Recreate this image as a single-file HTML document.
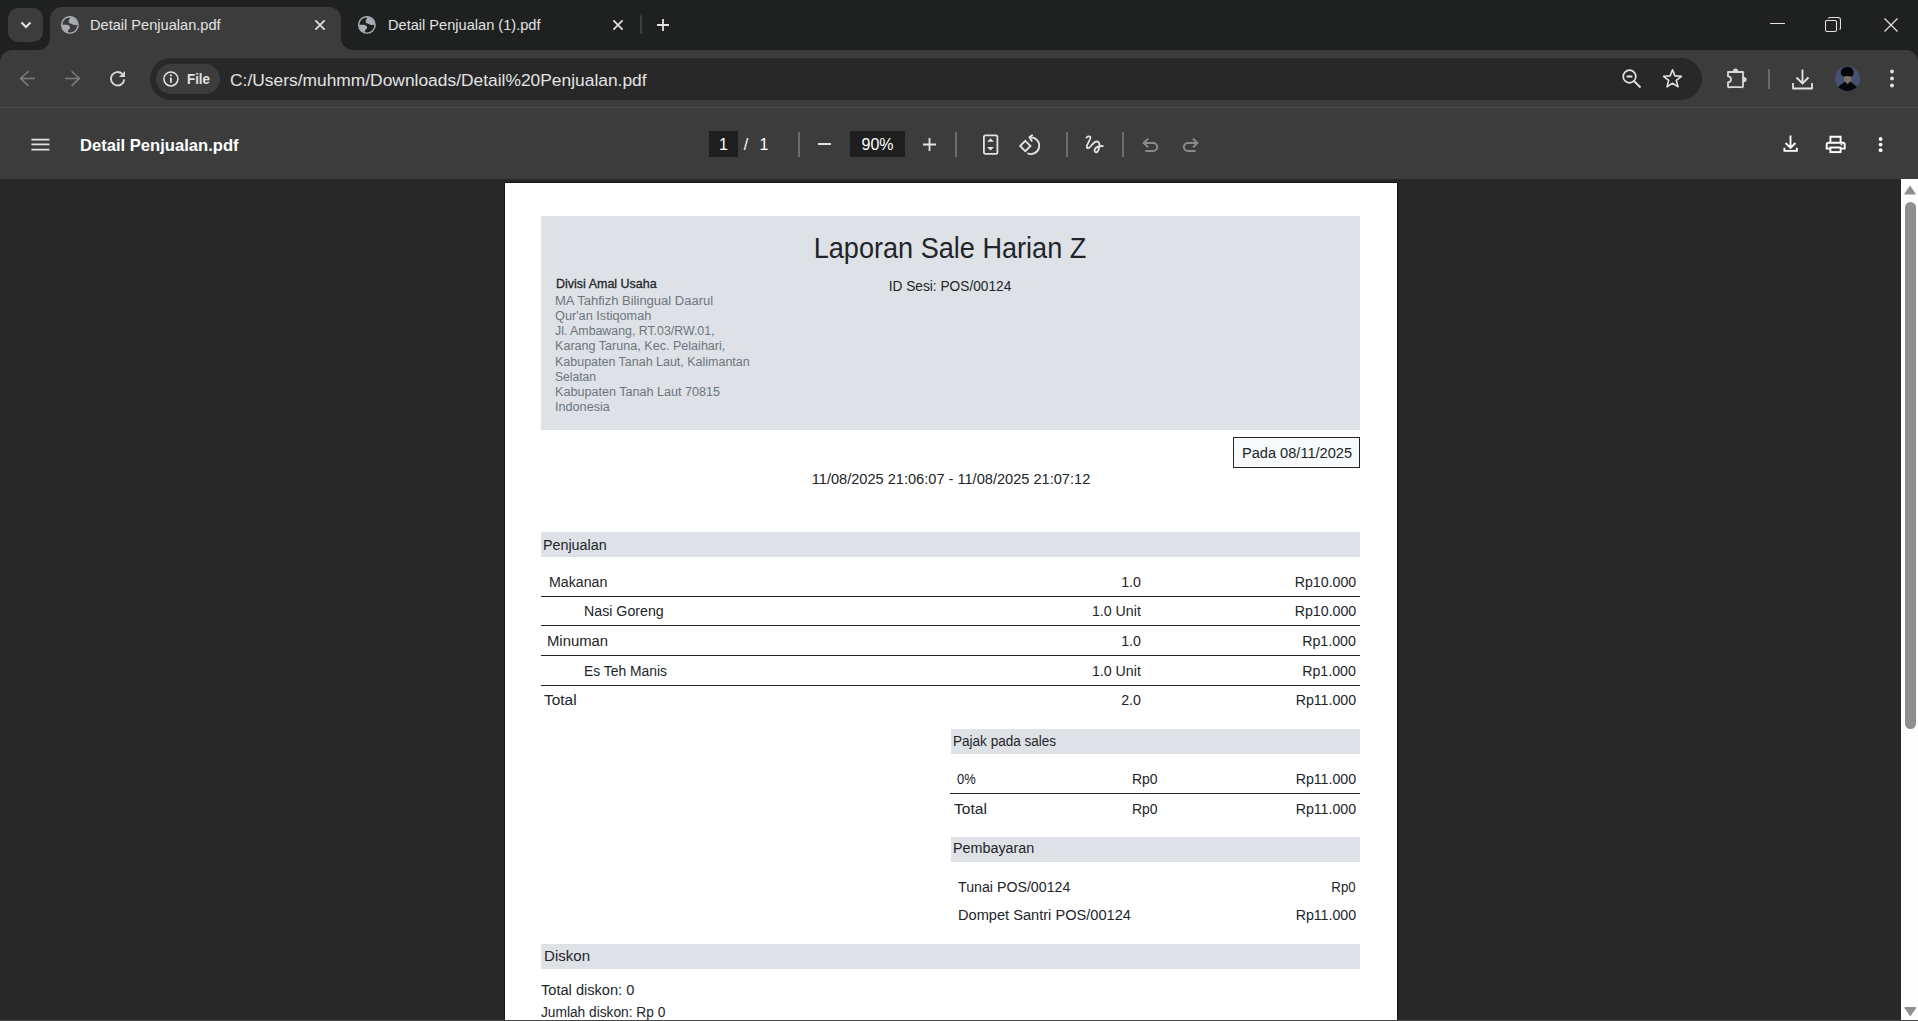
<!DOCTYPE html>
<html><head><meta charset="utf-8"><title>Detail Penjualan.pdf</title>
<style>
html,body{margin:0;padding:0;width:1918px;height:1021px;overflow:hidden;background:#282828;}
body{position:relative;font-family:"Liberation Sans",sans-serif;}
.t{position:absolute;white-space:pre;}
.r{position:absolute;display:block;}
</style></head><body>
<div class="r" style="left:0px;top:0px;width:1918px;height:64px;background:#1f2120;"></div>
<div class="r" style="left:8px;top:8px;width:35px;height:34px;background:#3c3c3c;border-radius:10px;"></div>
<svg class="r" style="left:20px;top:20px;" width="12" height="10" viewBox="0 0 12 10"><path d="M1.5 2.5 L6 7 L10.5 2.5" fill="none" stroke="#e3e3e3" stroke-width="2"/></svg>
<div class="r" style="left:50px;top:7px;width:291px;height:50px;background:#3c3c3c;border-radius:12px 12px 0 0;"></div>
<svg class="r" style="left:38px;top:38px;" width="12" height="12" viewBox="0 0 12 12"><path d="M12 0 V12 H0 A12 12 0 0 0 12 0 Z" fill="#3c3c3c"/></svg>
<svg class="r" style="left:341px;top:38px;" width="12" height="12" viewBox="0 0 12 12"><path d="M0 0 V12 H12 A12 12 0 0 1 0 0 Z" fill="#3c3c3c"/></svg>
<svg class="r" style="left:61px;top:16px;" width="18" height="18" viewBox="0 0 18 18"><circle cx="8.9" cy="8.9" r="8.2" fill="none" stroke="#a9adb3" stroke-width="1.45"/><path fill="#a9adb3" d="M9.6 1.3 C8.5 3 7.5 4.5 7.8 6.5 C8.5 7.6 10.5 7.5 12 8.5 C13 9.2 14.5 9.2 16.6 8.8 A7.8 7.8 0 0 0 9.6 1.3 Z"/><path fill="#a9adb3" d="M1.1 8.7 C3 8.6 6 8.5 7.5 9.2 C9 9.8 9.5 11.5 8.8 12.5 C8 13.5 6.8 13.8 6.7 16.6 A7.8 7.8 0 0 1 1.1 8.7 Z"/></svg>
<div class="t" style="top:17.38px;font-size:14.6px;line-height:17.52px;color:#e3e3e3;left:90px;">Detail Penjualan.pdf</div>
<svg class="r" style="left:314px;top:19px;" width="12" height="12" viewBox="0 0 12 12"><path d="M1.4 1.4 L10.6 10.6 M10.6 1.4 L1.4 10.6" stroke="#e3e3e3" stroke-width="1.7"/></svg>
<svg class="r" style="left:358px;top:16px;" width="18" height="18" viewBox="0 0 18 18"><circle cx="8.9" cy="8.9" r="8.2" fill="none" stroke="#a9adb3" stroke-width="1.45"/><path fill="#a9adb3" d="M9.6 1.3 C8.5 3 7.5 4.5 7.8 6.5 C8.5 7.6 10.5 7.5 12 8.5 C13 9.2 14.5 9.2 16.6 8.8 A7.8 7.8 0 0 0 9.6 1.3 Z"/><path fill="#a9adb3" d="M1.1 8.7 C3 8.6 6 8.5 7.5 9.2 C9 9.8 9.5 11.5 8.8 12.5 C8 13.5 6.8 13.8 6.7 16.6 A7.8 7.8 0 0 1 1.1 8.7 Z"/></svg>
<div class="t" style="top:17.38px;font-size:14.6px;line-height:17.52px;color:#e3e3e3;left:388px;">Detail Penjualan (1).pdf</div>
<svg class="r" style="left:611.5px;top:19px;" width="12" height="12" viewBox="0 0 12 12"><path d="M1.4 1.4 L10.6 10.6 M10.6 1.4 L1.4 10.6" stroke="#e3e3e3" stroke-width="1.7"/></svg>
<div class="r" style="left:640.3px;top:15px;width:2px;height:19px;background:#3d3e3e;border-radius:1px;"></div>
<svg class="r" style="left:656px;top:18px;" width="14" height="14" viewBox="0 0 14 14"><path d="M7 1 V13 M1 7 H13" stroke="#e3e3e3" stroke-width="1.8"/></svg>
<div class="r" style="left:1770px;top:23px;width:15px;height:1px;background:#e3e3e3;"></div>
<svg class="r" style="left:1825px;top:17px;" width="16" height="16" viewBox="0 0 16 16"><rect x="0.5" y="3.5" width="11" height="11" rx="1.5" fill="none" stroke="#e3e3e3" stroke-width="1.1"/><path d="M3.5 1.5 Q3.8 0.5 5 0.5 H13 Q15.5 0.5 15.5 3 V11 Q15.5 12.2 14.5 12.5" fill="none" stroke="#e3e3e3" stroke-width="1.1"/></svg>
<svg class="r" style="left:1884px;top:18px;" width="14" height="14" viewBox="0 0 14 14"><path d="M0.5 0.5 L13.5 13.5 M13.5 0.5 L0.5 13.5" stroke="#e3e3e3" stroke-width="1.2"/></svg>
<div class="r" style="left:0px;top:50px;width:1918px;height:58px;background:#3c3c3c;border-radius:12px 12px 0 0;"></div>
<div class="r" style="left:0px;top:107px;width:1918px;height:1px;background:#474948;"></div>
<svg class="r" style="left:19px;top:70px;" width="17" height="17" viewBox="0 0 17 17"><path d="M16 8.4 H1.6 M9.4 1.2 L1.6 8.4 L9.4 15.9" fill="none" stroke="#7d7d7d" stroke-width="1.5"/></svg>
<svg class="r" style="left:64px;top:70px;" width="17" height="17" viewBox="0 0 17 17"><path d="M1 8.4 H15.4 M7.6 1.2 L15.4 8.4 L7.6 15.9" fill="none" stroke="#7d7d7d" stroke-width="1.5"/></svg>
<svg class="r" style="left:105px;top:66px;" width="26" height="26" viewBox="0 0 26 26"><path d="M19.3 13.4 A6.7 6.7 0 1 1 17.2 7.8" fill="none" stroke="#d6d6d6" stroke-width="1.9"/><path d="M20 4.9 V11 H13.9 Z" fill="#d6d6d6"/></svg>
<div class="r" style="left:150px;top:58px;width:1552px;height:42px;background:#282828;border-radius:21px;"></div>
<div class="r" style="left:156px;top:64px;width:64px;height:30px;background:#3c3c3c;border-radius:15px;"></div>
<svg class="r" style="left:162px;top:70px;" width="18" height="18" viewBox="0 0 18 18"><circle cx="8.9" cy="8.9" r="7" fill="none" stroke="#e3e3e3" stroke-width="1.5"/><rect x="8" y="7.6" width="1.8" height="5.2" fill="#e3e3e3"/><circle cx="8.9" cy="5.3" r="1.1" fill="#e3e3e3"/></svg>
<div class="t" style="top:71.08px;font-size:14.5px;line-height:17.4px;color:#e3e3e3;font-weight:700;left:187px;transform:scaleX(0.92);transform-origin:left center;">File</div>
<div class="t" style="top:69.83px;font-size:17.4px;line-height:20.88px;color:#e3e3e3;left:230px;">C:/Users/muhmm/Downloads/Detail%20Penjualan.pdf</div>
<svg class="r" style="left:1620px;top:67px;" width="22" height="22" viewBox="0 0 22 22"><circle cx="9.5" cy="9.5" r="6.3" fill="none" stroke="#e3e3e3" stroke-width="1.7"/><path d="M6.6 9.5 H12.4" stroke="#e3e3e3" stroke-width="2"/><path d="M14 14 L20.5 20.5" stroke="#e3e3e3" stroke-width="1.8"/></svg>
<svg class="r" style="left:1662px;top:68px;" width="21" height="21" viewBox="0 0 21 21"><path d="M10.5 1.8 L12.9 7.9 L19.4 8.3 L14.3 12.4 L16 18.8 L10.5 15.2 L5 18.8 L6.7 12.4 L1.6 8.3 L8.1 7.9 Z" fill="none" stroke="#e3e3e3" stroke-width="1.6" stroke-linejoin="round"/></svg>
<svg class="r" style="left:1724px;top:66px;" width="26" height="24" viewBox="0 0 26 24"><path d="M4 6 H17.5 A1 1 0 0 1 19 7.5 V20 A1 1 0 0 1 17.5 21.2 H5.5 A1 1 0 0 1 4 20 V16.3 A3 3 0 0 0 4 10.3 Z" fill="none" stroke="#d8d8d8" stroke-width="1.8" stroke-linejoin="round"/><path d="M8.9 6.5 V5 A2.6 2.6 0 0 1 14.1 5 V6.5 Z" fill="#d8d8d8"/><path d="M18.5 10.9 H20 A2.6 2.6 0 0 1 20 16.1 H18.5 Z" fill="#d8d8d8"/></svg>
<div class="r" style="left:1768px;top:69px;width:2px;height:20px;background:#6a6a6a;"></div>
<svg class="r" style="left:1791px;top:68px;" width="23" height="23" viewBox="0 0 23 23"><path d="M11.5 1.5 V15 M5.5 9.5 L11.5 15.5 L17.5 9.5" fill="none" stroke="#e3e3e3" stroke-width="1.8"/><path d="M2 15 V20.5 H21 V15" fill="none" stroke="#e3e3e3" stroke-width="1.8" stroke-linejoin="round"/></svg>
<svg class="r" style="left:1835px;top:66px;" width="25" height="25" viewBox="0 0 25 25"><defs><clipPath id="av"><circle cx="12.5" cy="12.5" r="12.5"/></clipPath></defs><g clip-path="url(#av)"><rect width="25" height="25" fill="#475070"/><ellipse cx="12.6" cy="13" rx="3.7" ry="4.2" fill="#7d6e66"/><path d="M0 25 V21.5 L3.5 20.5 L10 15.5 L12.6 18.5 L15.2 15.5 L21.5 20.5 L25 21.5 V25 Z" fill="#05060b"/><path d="M6 8 Q5 3.5 8.5 2 Q12 0 15.5 1.5 Q19 3 18.5 7.5 Q18 10 16.5 10.5 Q12.5 9.5 8.8 10.5 Q7 10 6 8 Z" fill="#030303"/></g></svg>
<svg class="r" style="left:1888px;top:68px;" width="8" height="22" viewBox="0 0 8 22"><circle cx="4" cy="3.5" r="1.9" fill="#e3e3e3"/><circle cx="4" cy="10.5" r="1.9" fill="#e3e3e3"/><circle cx="4" cy="17.5" r="1.9" fill="#e3e3e3"/></svg>
<div class="r" style="left:0px;top:108px;width:1918px;height:71px;background:#3c3c3c;"></div>
<svg class="r" style="left:31px;top:138px;" width="19" height="13" viewBox="0 0 19 13"><path d="M0.4 1.6 H18.4 M0.4 6.4 H18.4 M0.4 11.6 H18.4" stroke="#e3e3e3" stroke-width="1.7"/></svg>
<div class="t" style="top:135.79px;font-size:16.6px;line-height:19.92px;color:#ffffff;font-weight:700;left:80px;">Detail Penjualan.pdf</div>
<div class="r" style="left:709px;top:131px;width:29px;height:26px;background:#1e1e1e;"></div>
<div class="t" style="top:135.36px;font-size:16px;line-height:19.2px;color:#ffffff;left:123.5px;width:1200px;text-align:center;">1</div>
<div class="t" style="top:135.36px;font-size:16px;line-height:19.2px;color:#ffffff;left:146px;width:1200px;text-align:center;">/</div>
<div class="t" style="top:135.36px;font-size:16px;line-height:19.2px;color:#ffffff;left:164px;width:1200px;text-align:center;">1</div>
<div class="r" style="left:798px;top:132px;width:2px;height:25px;background:#6c6c6c;"></div>
<div class="r" style="left:818px;top:143.2px;width:13px;height:1.8px;background:#e3e3e3;"></div>
<div class="r" style="left:850px;top:131px;width:55px;height:26px;background:#1e1e1e;"></div>
<div class="t" style="top:135.36px;font-size:16px;line-height:19.2px;color:#ffffff;left:277.5px;width:1200px;text-align:center;">90%</div>
<svg class="r" style="left:922px;top:137px;" width="15" height="15" viewBox="0 0 15 15"><path d="M7.5 1 V14 M1 7.5 H14" stroke="#e3e3e3" stroke-width="1.8"/></svg>
<div class="r" style="left:955px;top:132px;width:2px;height:25px;background:#6c6c6c;"></div>
<svg class="r" style="left:982px;top:133px;" width="17" height="23" viewBox="0 0 17 23"><rect x="1.9" y="2.3" width="13.5" height="18.6" rx="1.6" fill="none" stroke="#e3e3e3" stroke-width="1.8"/><path d="M5 8.7 L8.5 5.2 L12 8.7 Z M5 14 L8.5 17.5 L12 14 Z" fill="#e3e3e3"/></svg>
<svg class="r" style="left:1016px;top:132px;" width="28" height="26" viewBox="0 0 28 26"><path d="M9.3 8.8 L14.5 14 L9.3 19.2 L4.1 14 Z" fill="none" stroke="#e3e3e3" stroke-width="1.8" stroke-linejoin="miter"/><path d="M11.4 21.2 A8.3 8.3 0 1 0 14.8 5.4" fill="none" stroke="#e3e3e3" stroke-width="1.8"/><path d="M16.7 2.7 L13.4 5.2 L16.2 9.4" fill="none" stroke="#e3e3e3" stroke-width="1.8"/></svg>
<div class="r" style="left:1066px;top:132px;width:2px;height:25px;background:#6c6c6c;"></div>
<svg class="r" style="left:1082px;top:132px;" width="25" height="25" viewBox="0 0 25 25"><path d="M4.4 5.6 C5.5 4.5 7.5 3.8 8.4 5 C9.2 6.5 5 12 4.8 14.5 C4.6 16.5 6.5 17 8.5 14.5 C10.5 12 12.5 9.5 14.8 9.5 C17 9.5 17.8 11.5 17.3 14.5 C16.8 17.5 15.5 20.3 14 20.3 C12.3 20.3 12 18 13.5 16.2 C15 14.5 18 14.2 20.8 14" fill="none" stroke="#e3e3e3" stroke-width="1.8" stroke-linecap="round"/></svg>
<div class="r" style="left:1122px;top:132px;width:2px;height:25px;background:#6c6c6c;"></div>
<svg class="r" style="left:1140px;top:134px;" width="20" height="20" viewBox="0 0 20 20"><path d="M8.1 4.6 L3.6 9 L8.1 13.2 M3.6 9 H13.2 A4 4 0 0 1 13.2 17 H5.4" fill="none" stroke="#8a8a8a" stroke-width="2"/></svg>
<svg class="r" style="left:1180px;top:134px;" width="20" height="20" viewBox="0 0 20 20"><path d="M13 4.6 L17.4 9 L13 13.2 M17.4 9 H7.9 A4 4 0 0 0 7.9 17 H15.6" fill="none" stroke="#8a8a8a" stroke-width="2"/></svg>
<svg class="r" style="left:1780px;top:133px;" width="20" height="21" viewBox="0 0 20 21"><path d="M10.5 2.4 V15 M5.6 10 L10.5 15 L15.4 10" fill="none" stroke="#ffffff" stroke-width="1.9"/><path d="M4.4 14.8 V17.9 H16.8 V14.8" fill="none" stroke="#ffffff" stroke-width="1.9"/></svg>
<svg class="r" style="left:1823px;top:133px;" width="25" height="23" viewBox="0 0 25 23"><path d="M7.4 9 V3.8 H17.6 V9" fill="none" stroke="#ffffff" stroke-width="1.9"/><path d="M7.4 15.6 H3.7 V11.6 Q3.7 9.8 5.5 9.8 H19.9 Q21.7 9.8 21.7 11.6 V15.6 H17.6" fill="none" stroke="#ffffff" stroke-width="1.9"/><rect x="7.4" y="14.5" width="10.2" height="4.6" fill="none" stroke="#ffffff" stroke-width="1.9"/><circle cx="18.4" cy="11.6" r="0.9" fill="#ffffff"/></svg>
<svg class="r" style="left:1876px;top:135px;" width="9" height="19" viewBox="0 0 9 19"><circle cx="4.6" cy="4" r="1.9" fill="#fff"/><circle cx="4.6" cy="9.6" r="1.9" fill="#fff"/><circle cx="4.6" cy="15.2" r="1.9" fill="#fff"/></svg>
<div class="r" style="left:0px;top:179px;width:1918px;height:842px;background:#282828;"></div>
<div class="r" style="left:1901px;top:179px;width:17px;height:842px;background:#fdfdfd;"></div>
<svg class="r" style="left:1903px;top:184px;" width="14" height="12" viewBox="0 0 14 12"><path d="M7 1.5 L12.5 9.5 Q13 10.5 12 10.5 H2 Q1 10.5 1.5 9.5 Z" fill="#8f8f8f"/></svg>
<div class="r" style="left:1905px;top:202px;width:11px;height:527px;background:#8f8f8f;border-radius:6px;"></div>
<svg class="r" style="left:1903px;top:1005px;" width="15" height="13" viewBox="0 0 15 13"><path d="M7.3 11.4 L13 3.2 Q13.8 2 12.4 2 H2.2 Q0.8 2 1.6 3.2 Z" fill="#8f8f8f"/></svg>
<div class="r" style="left:504px;top:182px;width:894px;height:839px;background:#151515;"></div>
<div class="r" style="left:505px;top:183px;width:892px;height:838px;background:#ffffff;"></div>
<div class="r" style="left:541px;top:216px;width:819px;height:214px;background:#dee2e6;"></div>
<div class="t" style="top:231.01px;font-size:28.73px;line-height:34.48px;color:#212529;left:350px;width:1200px;text-align:center;transform:scaleX(0.9434);transform-origin:center center;">Laporan Sale Harian Z</div>
<div class="t" style="top:278.26px;font-size:14.52px;line-height:17.42px;color:#212529;left:350px;width:1200px;text-align:center;transform:scaleX(0.9434);transform-origin:center center;">ID Sesi: POS/00124</div>
<div style="-webkit-text-stroke:0.3px #212529">
<div class="t" style="top:276.16px;font-size:13.25px;line-height:15.9px;color:#212529;left:555.6px;transform:scaleX(0.9434);transform-origin:left center;">Divisi Amal Usaha</div>
</div>
<div class="t" style="top:292.86px;font-size:13.25px;line-height:15.9px;color:#6c757d;left:554.8px;transform:scaleX(0.9821);transform-origin:left center;">MA Tahfizh Bilingual Daarul</div>
<div class="t" style="top:308.06px;font-size:13.25px;line-height:15.9px;color:#6c757d;left:554.8px;transform:scaleX(0.9585);transform-origin:left center;">Qur'an Istiqomah</div>
<div class="t" style="top:323.26px;font-size:13.25px;line-height:15.9px;color:#6c757d;left:554.8px;transform:scaleX(0.9321);transform-origin:left center;">Jl. Ambawang, RT.03/RW.01,</div>
<div class="t" style="top:338.46px;font-size:13.25px;line-height:15.9px;color:#6c757d;left:554.8px;transform:scaleX(0.9491);transform-origin:left center;">Karang Taruna, Kec. Pelaihari,</div>
<div class="t" style="top:353.66px;font-size:13.25px;line-height:15.9px;color:#6c757d;left:554.8px;transform:scaleX(0.9415);transform-origin:left center;">Kabupaten Tanah Laut, Kalimantan</div>
<div class="t" style="top:368.86px;font-size:13.25px;line-height:15.9px;color:#6c757d;left:554.8px;transform:scaleX(0.9132);transform-origin:left center;">Selatan</div>
<div class="t" style="top:384.06px;font-size:13.25px;line-height:15.9px;color:#6c757d;left:554.8px;transform:scaleX(0.9509);transform-origin:left center;">Kabupaten Tanah Laut 70815</div>
<div class="t" style="top:399.26px;font-size:13.25px;line-height:15.9px;color:#6c757d;left:554.8px;transform:scaleX(0.9538);transform-origin:left center;">Indonesia</div>
<div class="r" style="left:1233px;top:437px;width:127px;height:31px;background:#f8f9fa;box-sizing:border-box;border:1.3px solid #212529;"></div>
<div class="t" style="top:444.15px;font-size:15.16px;line-height:18.19px;color:#212529;left:1241.8px;transform:scaleX(0.9623);transform-origin:left center;">Pada 08/11/2025</div>
<div class="t" style="top:469.76px;font-size:15.26px;line-height:18.31px;color:#212529;left:350.79999999999995px;width:1200px;text-align:center;transform:scaleX(0.9566);transform-origin:center center;">11/08/2025 21:06:07 - 11/08/2025 21:07:12</div>
<div class="r" style="left:541px;top:532px;width:819px;height:25px;background:#dee2e6;"></div>
<div class="t" style="top:536.05px;font-size:15.16px;line-height:18.19px;color:#212529;left:543.4px;transform:scaleX(0.9434);transform-origin:left center;">Penjualan</div>
<div class="t" style="top:573.06px;font-size:15.05px;line-height:18.06px;color:#212529;left:548.5px;transform:scaleX(0.9434);transform-origin:left center;">Makanan</div>
<div class="t" style="top:573.06px;font-size:15.05px;line-height:18.06px;color:#212529;right:777px;transform:scaleX(0.9434);transform-origin:right center;">1.0</div>
<div class="t" style="top:573.06px;font-size:15.05px;line-height:18.06px;color:#212529;right:562px;transform:scaleX(0.9434);transform-origin:right center;">Rp10.000</div>
<div class="t" style="top:601.56px;font-size:15.05px;line-height:18.06px;color:#212529;left:584.4px;transform:scaleX(0.9434);transform-origin:left center;">Nasi Goreng</div>
<div class="t" style="top:601.56px;font-size:15.05px;line-height:18.06px;color:#212529;right:777px;transform:scaleX(0.9434);transform-origin:right center;">1.0 Unit</div>
<div class="t" style="top:601.56px;font-size:15.05px;line-height:18.06px;color:#212529;right:562px;transform:scaleX(0.9434);transform-origin:right center;">Rp10.000</div>
<div class="t" style="top:631.66px;font-size:15.05px;line-height:18.06px;color:#212529;left:547px;transform:scaleX(0.9868);transform-origin:left center;">Minuman</div>
<div class="t" style="top:631.66px;font-size:15.05px;line-height:18.06px;color:#212529;right:777px;transform:scaleX(0.9434);transform-origin:right center;">1.0</div>
<div class="t" style="top:631.66px;font-size:15.05px;line-height:18.06px;color:#212529;right:562px;transform:scaleX(0.9434);transform-origin:right center;">Rp1.000</div>
<div class="t" style="top:661.76px;font-size:15.05px;line-height:18.06px;color:#212529;left:584.4px;transform:scaleX(0.9208);transform-origin:left center;">Es Teh Manis</div>
<div class="t" style="top:661.76px;font-size:15.05px;line-height:18.06px;color:#212529;right:777px;transform:scaleX(0.9434);transform-origin:right center;">1.0 Unit</div>
<div class="t" style="top:661.76px;font-size:15.05px;line-height:18.06px;color:#212529;right:562px;transform:scaleX(0.9434);transform-origin:right center;">Rp1.000</div>
<div class="t" style="top:690.76px;font-size:15.05px;line-height:18.06px;color:#212529;left:544.4px;transform:scaleX(1.0255);transform-origin:left center;">Total</div>
<div class="t" style="top:690.76px;font-size:15.05px;line-height:18.06px;color:#212529;right:777px;transform:scaleX(0.9434);transform-origin:right center;">2.0</div>
<div class="t" style="top:690.76px;font-size:15.05px;line-height:18.06px;color:#212529;right:562px;transform:scaleX(0.9434);transform-origin:right center;">Rp11.000</div>
<div class="r" style="left:541px;top:596px;width:819px;height:1.4px;background:#212529;"></div>
<div class="r" style="left:541px;top:625px;width:819px;height:1.4px;background:#212529;"></div>
<div class="r" style="left:541px;top:655px;width:819px;height:1.4px;background:#212529;"></div>
<div class="r" style="left:541px;top:685px;width:819px;height:1.4px;background:#212529;"></div>
<div class="r" style="left:951px;top:729px;width:409px;height:25px;background:#dee2e6;"></div>
<div class="t" style="top:731.56px;font-size:15.05px;line-height:18.06px;color:#212529;left:953.2px;transform:scaleX(0.9);transform-origin:left center;">Pajak pada sales</div>
<div class="t" style="top:769.56px;font-size:15.05px;line-height:18.06px;color:#212529;left:957.4px;transform:scaleX(0.8623);transform-origin:left center;">0%</div>
<div class="t" style="top:769.56px;font-size:15.05px;line-height:18.06px;color:#212529;left:1132px;transform:scaleX(0.9283);transform-origin:left center;">Rp0</div>
<div class="t" style="top:769.56px;font-size:15.05px;line-height:18.06px;color:#212529;right:562px;transform:scaleX(0.9434);transform-origin:right center;">Rp11.000</div>
<div class="r" style="left:950px;top:793px;width:410px;height:1.4px;background:#212529;"></div>
<div class="t" style="top:799.66px;font-size:15.05px;line-height:18.06px;color:#212529;left:954.2px;transform:scaleX(1.0349);transform-origin:left center;">Total</div>
<div class="t" style="top:799.66px;font-size:15.05px;line-height:18.06px;color:#212529;left:1132px;transform:scaleX(0.9283);transform-origin:left center;">Rp0</div>
<div class="t" style="top:799.66px;font-size:15.05px;line-height:18.06px;color:#212529;right:562px;transform:scaleX(0.9434);transform-origin:right center;">Rp11.000</div>
<div class="r" style="left:951px;top:837px;width:409px;height:25px;background:#dee2e6;"></div>
<div class="t" style="top:839.46px;font-size:15.05px;line-height:18.06px;color:#212529;left:953.2px;transform:scaleX(0.9528);transform-origin:left center;">Pembayaran</div>
<div class="t" style="top:877.76px;font-size:15.05px;line-height:18.06px;color:#212529;left:958.2px;transform:scaleX(0.9434);transform-origin:left center;">Tunai POS/00124</div>
<div class="t" style="top:877.76px;font-size:15.05px;line-height:18.06px;color:#212529;right:562.4000000000001px;transform:scaleX(0.8783);transform-origin:right center;">Rp0</div>
<div class="t" style="top:906.36px;font-size:15.05px;line-height:18.06px;color:#212529;left:957.6px;transform:scaleX(0.9708);transform-origin:left center;">Dompet Santri POS/00124</div>
<div class="t" style="top:906.36px;font-size:15.05px;line-height:18.06px;color:#212529;right:562px;transform:scaleX(0.9434);transform-origin:right center;">Rp11.000</div>
<div class="r" style="left:541px;top:944px;width:819px;height:25px;background:#dee2e6;"></div>
<div class="t" style="top:946.96px;font-size:15.05px;line-height:18.06px;color:#212529;left:543.6px;transform:scaleX(1.0019);transform-origin:left center;">Diskon</div>
<div class="t" style="top:980.76px;font-size:15.05px;line-height:18.06px;color:#212529;left:540.5px;transform:scaleX(0.9698);transform-origin:left center;">Total diskon: 0</div>
<div class="t" style="top:1002.76px;font-size:15.05px;line-height:18.06px;color:#212529;left:541px;transform:scaleX(0.9123);transform-origin:left center;">Jumlah diskon: Rp 0</div>
<div class="r" style="left:0px;top:1020px;width:1918px;height:1px;background:#474948;"></div>
</body></html>
